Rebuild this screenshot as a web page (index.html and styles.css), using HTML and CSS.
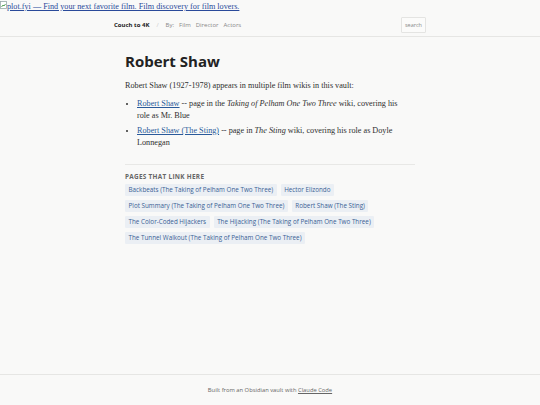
FILE: index.html
```html
<!DOCTYPE html>
<html lang="en">
<head>
<meta charset="utf-8">
<title>Robert Shaw</title>
<link rel="stylesheet" href="styles.css">
</head>
<body>
<div class="page">
  <div class="banner">
    <a href="#" class="banner-link"><svg class="broken" width="7" height="8" viewBox="0 0 7 8"><rect x="0.5" y="0.5" width="6" height="7" fill="#fff" stroke="#9aa" stroke-width="0.8"/><path d="M1.5 6 L3 4 L4 5 L5.5 3" stroke="#4a9a4a" stroke-width="0.9" fill="none"/></svg>plot.fyi — Find your next favorite film. Film discovery for film lovers.</a>
  </div>
  <header class="topbar">
    <div class="topbar-inner">
      <nav class="nav">
        <a href="#" class="brand">Couch to 4K</a>
        <span class="sep">/</span>
        <span class="by">By:</span>
        <a href="#" class="nav-link">Film</a>
        <a href="#" class="nav-link">Director</a>
        <a href="#" class="nav-link">Actors</a>
      </nav>
      <div class="search">search</div>
    </div>
  </header>
  <main class="content">
    <h1 class="title">Robert Shaw</h1>
    <p class="lead">Robert Shaw (1927-1978) appears in multiple film wikis in this vault:</p>
    <ul class="list">
      <li><a href="#">Robert Shaw</a> -- page in the <em>Taking of Pelham One Two Three</em> wiki, covering his role as Mr. Blue</li>
      <li><a href="#">Robert Shaw (The Sting)</a> -- page in <em>The Sting</em> wiki, covering his role as Doyle Lonnegan</li>
    </ul>
    <section class="backlinks">
      <h2 class="backlinks-title">PAGES THAT LINK HERE</h2>
      <div class="tags">
        <a href="#" class="tag">Backbeats (The Taking of Pelham One Two Three)</a>
        <a href="#" class="tag">Hector Elizondo</a>
        <a href="#" class="tag">Plot Summary (The Taking of Pelham One Two Three)</a>
        <a href="#" class="tag">Robert Shaw (The Sting)</a>
        <a href="#" class="tag">The Color-Coded Hijackers</a>
        <a href="#" class="tag">The Hijacking (The Taking of Pelham One Two Three)</a>
        <a href="#" class="tag">The Tunnel Walkout (The Taking of Pelham One Two Three)</a>
      </div>
    </section>
  </main>
  <footer class="footer">Built from an Obsidian vault with <a href="#">Claude Code</a></footer>
</div>
</body>
</html>
```

FILE: styles.css
```css
* { box-sizing: border-box; }
html, body { margin: 0; padding: 0; }
body {
  background: #f9f9f8;
  color: #222;
  font-family: "Open Sans", "Noto Sans", sans-serif;
}
.page {
  min-height: 405px;
  display: flex;
  flex-direction: column;
}
.banner {
  height: 13px;
  font-family: "Liberation Serif", serif;
  font-size: 8.2px;
  line-height: 11px;
  padding-top: 1px;
}
.banner-link {
  color: #2a4a9a;
  text-decoration: underline;
  display: inline-flex;
  align-items: flex-start;
}
.broken { margin-top: 0; }
.topbar {
  border-bottom: 1px solid #e6e6e4;
  height: 24px;
}
.topbar-inner {
  width: 312px;
  margin: 0 auto;
  height: 100%;
  display: flex;
  align-items: center;
  justify-content: space-between;
}
.nav {
  display: flex;
  align-items: center;
  gap: 5px;
  font-size: 6px;
}
.brand {
  color: #222;
  font-weight: 700;
  text-decoration: none;
  margin-right: 2px;
}
.sep { color: #ccc; margin-right: 2px; }
.by { color: #888; }
.nav-link { color: #888; text-decoration: none; }
.search {
  font-size: 5.5px;
  color: #888;
  border: 1px solid #e4e4e2;
  background: #fbfbfa;
  padding: 3px 3px;
  border-radius: 1px;
}
.content {
  width: 290px;
  margin: 0 auto;
  padding-top: 14px;
  flex: 1;
}
.title {
  font-size: 15px;
  font-weight: 700;
  margin: 0 0 9px;
  line-height: 20px;
  color: #222;
}
.lead, .list {
  font-family: "Liberation Serif", serif;
  font-size: 8.2px;
  line-height: 12px;
  color: #2f2f2f;
}
.lead { margin: 0 0 6px; }
.list { margin: 0; padding-left: 12px; padding-right: 10px; }
.list li { margin-bottom: 3px; }
.list a { color: #2a5a9a; }
.backlinks {
  margin-top: 15px;
  border-top: 1px solid #e8e8e6;
  padding-top: 7px;
}
.backlinks-title {
  font-size: 6.4px;
  font-weight: 700;
  color: #666;
  letter-spacing: 0.3px;
  margin: 0 0 3px;
  line-height: 9px;
}
.tags {
  display: flex;
  flex-wrap: wrap;
  gap: 4px 4px;
}
.tag {
  font-size: 6.3px;
  line-height: 12px;
  padding: 0 3.5px;
  background: #ebeff4;
  color: #3a5f95;
  text-decoration: none;
  border-radius: 1px;
}
.footer {
  border-top: 1px solid #e6e6e4;
  height: 31px;
  display: flex;
  align-items: center;
  justify-content: center;
  font-size: 5.8px;
  color: #666;
}
.footer a { color: #666; margin-left: 1.5px; }
```
